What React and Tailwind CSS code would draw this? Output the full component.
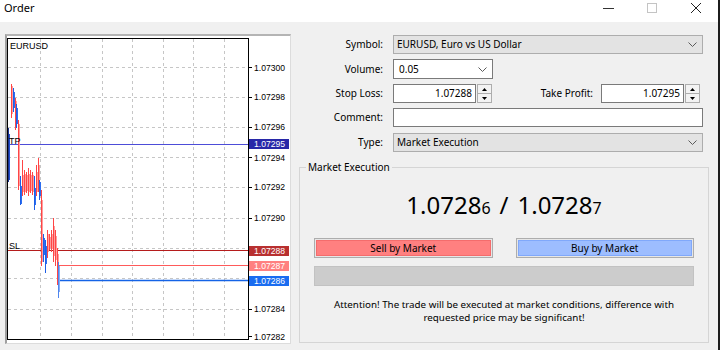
import React from 'react'

const GRID_X = [40, 71, 102, 132, 163, 193, 224]
const GRID_Y = [67, 97, 127, 157, 187, 218, 248, 278, 309]

// x, high, low, body top, body bottom, kind (page coords)
const CANDLES = [
  [8, 128, 182, 134, 180, 'd'],
  [11, 84, 118, 86, 114, 'r'],
  [13, 88, 112, 92, 108, 'b'],
  [15, 98, 130, 101, 127, 'r'],
  [16, 104, 128, 108, 124, 'b'],
  [18, 120, 190, 124, 186, 'r'],
  [20, 176, 205, 186, 204, 'b'],
  [22, 160, 196, 175, 192, 'r'],
  [24, 170, 195, 174, 192, 'r'],
  [26, 172, 193, 175, 191, 'r'],
  [28, 168, 196, 174, 192, 'r'],
  [30, 170, 193, 175, 191, 'r'],
  [32, 172, 195, 175, 192, 'r'],
  [34, 176, 210, 188, 205, 'b'],
  [36, 165, 196, 172, 192, 'r'],
  [38, 158, 192, 165, 186, 'r'],
  [39, 180, 200, 182, 196, 'b'],
  [41, 190, 266, 200, 262, 'r'],
  [43, 234, 262, 238, 255, 'b'],
  [45, 240, 273, 246, 264, 'b'],
  [47, 230, 258, 234, 252, 'r'],
  [49, 234, 250, 237, 248, 'r'],
  [51, 230, 252, 234, 249, 'r'],
  [53, 218, 262, 226, 256, 'r'],
  [55, 230, 266, 236, 260, 'r'],
  [57, 248, 285, 254, 280, 'r'],
  [58, 262, 298, 266, 292, 'l'],
]

const COLORS = {
  r: ['#ff4545', '#ff9e9e'],
  b: ['#1d5fe6', '#2d6ef0'],
  d: ['#1b2f8a', '#1d4fd0'],
  l: ['#4f86ee', '#86adf5'],
}

const AXIS = [
  { v: '1.07300', cls: 'top-[25px]' },
  { v: '1.07298', cls: 'top-[54px]' },
  { v: '1.07296', cls: 'top-[84px]' },
  { v: '1.07295', cls: 'top-[101px] bg-[#2828a8] text-white', box: true },
  { v: '1.07294', cls: 'top-[115px]' },
  { v: '1.07292', cls: 'top-[144px]' },
  { v: '1.07290', cls: 'top-[175px]' },
  { v: '1.07288', cls: 'top-[208px] bg-[#b83030] text-white', box: true },
  { v: '1.07287', cls: 'top-[223px] bg-[#ff8080] text-white', box: true },
  { v: '1.07286', cls: 'top-[238px] bg-[#1a6cf0] text-white', box: true },
  { v: '1.07284', cls: 'top-[266px]' },
  { v: '1.07282', cls: 'top-[294px]' },
]

function Chart() {
  return (
    <div className="relative w-[242px] h-[302px] border border-black">
      <svg width="240" height="300" className="absolute left-0 top-0">
        <g transform="translate(-8,-39)">
          {GRID_X.map((x) => (
            <line key={x} x1={x + 0.5} x2={x + 0.5} y1={39} y2={339} stroke="#c6c6c6" strokeDasharray="3 3" />
          ))}
          {GRID_Y.map((y) => (
            <line key={y} x1={8} x2={248} y1={y + 0.5} y2={y + 0.5} stroke="#c6c6c6" strokeDasharray="3 3" />
          ))}
          <line x1={8} x2={248} y1={144.5} y2={144.5} stroke="#4d4dd8" />
          <line x1={8} x2={248} y1={250.5} y2={250.5} stroke="#b51c1c" />
          <line x1={59} x2={248} y1={265.5} y2={265.5} stroke="#ff5a5a" />
          <line x1={57} x2={248} y1={280.5} y2={280.5} stroke="#1463e6" strokeWidth="1.4" />
          {CANDLES.map(([x, hi, lo, top, bot, kind], i) => (
            <g key={i}>
              <rect x={x} y={top} width={2} height={bot - top} fill={COLORS[kind][1]} />
              <line x1={x + 0.5} x2={x + 0.5} y1={hi} y2={lo} stroke={COLORS[kind][0]} />
            </g>
          ))}
          <g fontFamily="'Liberation Sans', sans-serif" fontSize="9" fill="#000">
            <text x={10} y={48.5}>EURUSD</text>
            <text x={9} y={143.5}>TP</text>
            <text x={9} y={249}>SL</text>
          </g>
        </g>
      </svg>
    </div>
  )
}

function Axis() {
  return (
    <div className="relative w-[41px] h-[302px] font-['Liberation_Sans',sans-serif] text-[8.6px]">
      <svg width="4" height="302" className="absolute left-0 top-0">
        {[29.5, 59.5, 89.5, 119.5, 149.5, 180.5, 271.5, 298.5].map((y) => (
          <line key={y} x1={0} x2={3} y1={y} y2={y} stroke="#000" />
        ))}
      </svg>
      {AXIS.map((a) => (
        <div
          key={a.v}
          className={`absolute h-[10px] leading-[10px] ${a.box ? 'left-0 w-[40px] pl-[5px]' : 'left-[5px]'} ${a.cls}`}
        >
          {a.v}
        </div>
      ))}
    </div>
  )
}

function Chevron() {
  return (
    <svg width="9" height="5" className="shrink-0">
      <polyline points="0.5,0.5 4.5,4.5 8.5,0.5" fill="none" stroke="#5a5a5a" />
    </svg>
  )
}

function Spinner() {
  return (
    <div className="ml-[1px] w-[15px] h-[19px] border border-[#adadad] bg-[#f3f3f3] flex flex-col">
      <div className="flex-1 flex items-center justify-center border-b border-[#adadad]">
        <svg width="5" height="3"><polygon points="2.5,0 5,3 0,3" fill="#000" /></svg>
      </div>
      <div className="flex-1 flex items-center justify-center">
        <svg width="5" height="3"><polygon points="0,0 5,0 2.5,3" fill="#000" /></svg>
      </div>
    </div>
  )
}

function Row({ label, children, className = 'h-[19px]' }) {
  return (
    <div className={`flex items-center ${className}`}>
      <div className="w-[84px] text-right">{label}</div>
      <div className="ml-[10px] flex-1 h-full flex items-center">{children}</div>
    </div>
  )
}

export default function App() {
  return (
    <div className="w-[720px] h-[350px] bg-[#f0f0f0] border-r-2 border-[#1c1c1c] flex flex-col overflow-hidden font-['Noto_Sans',sans-serif] text-[10px] text-black">
      {/* title bar */}
      <div className="h-[22px] bg-white flex items-start shrink-0">
        <div className="pl-[4px] text-[11px] leading-[16px]">Order</div>
        <div className="ml-auto flex">
          <div className="w-[44px] h-[16px] flex items-center justify-center">
            <svg width="11" height="1"><line x1="0" x2="11" y1="0.5" y2="0.5" stroke="#333" /></svg>
          </div>
          <div className="w-[44px] h-[16px] flex items-center justify-center">
            <svg width="10" height="10"><rect x="0.5" y="0.5" width="9" height="9" fill="none" stroke="#c4c4c4" /></svg>
          </div>
          <div className="w-[44px] h-[16px] flex items-center justify-center">
            <svg width="10" height="10">
              <line x1="0" y1="0" x2="10" y2="10" stroke="#222" />
              <line x1="10" y1="0" x2="0" y2="10" stroke="#222" />
            </svg>
          </div>
        </div>
      </div>

      <div className="flex items-start">
        {/* chart panel */}
        <div className="ml-[5px] mt-[12px] h-[310px] bg-white border-l-2 border-t-2 border-l-[#a0a0a0] border-t-[#b4b4b4] border-r border-b border-r-[#dcdcdc] border-b-[#dcdcdc] pt-[2px] flex">
          <Chart />
          <Axis />
        </div>

        {/* order form */}
        <div className="ml-[8px] mt-[13px] w-[410px] flex flex-col">
          <div className="w-[404px] flex flex-col gap-[5px]">
            <Row label="Symbol:">
              <div className="w-full h-full bg-[#e3e3e3] border border-[#adadad] flex items-center pl-[3px] pr-[5px]">
                <span className="flex-1">EURUSD, Euro vs US Dollar</span>
                <Chevron />
              </div>
            </Row>
            <Row label="Volume:" className="h-[20px]">
              <div className="w-[100px] h-full bg-white border border-[#7a7a7a] flex items-center pl-[5px] pr-[5px]">
                <span className="flex-1">0.05</span>
                <Chevron />
              </div>
            </Row>
            <Row label="Stop Loss:">
              <div className="w-[83px] h-full bg-white border border-[#7a7a7a] flex items-center justify-end pr-[3px]">1.07288</div>
              <Spinner />
              <div className="flex-1 text-right pr-[8px]">Take Profit:</div>
              <div className="w-[83px] h-full bg-white border border-[#7a7a7a] flex items-center justify-end pr-[3px]">1.07295</div>
              <Spinner />
              <div className="w-[3px]" />
            </Row>
            <Row label="Comment:">
              <div className="w-full h-full bg-white border border-[#7a7a7a]" />
            </Row>
            <Row label="Type:" className="h-[19px] mt-[1px]">
              <div className="w-full h-full bg-[#e3e3e3] border border-[#adadad] flex items-center pl-[3px] pr-[5px]">
                <span className="flex-1">Market Execution</span>
                <Chevron />
              </div>
            </Row>
          </div>

          {/* market execution group */}
          <div className="relative mt-[15px] h-[176px] border border-[#d5d5d5] px-[14px] flex flex-col">
            <div className="absolute -top-[8px] left-[6px] px-[2px] bg-[#f0f0f0] leading-[14px]">Market Execution</div>
            <div className="mt-[25px] h-[24px] flex items-baseline justify-center leading-[24px]">
              <span className="text-[24px]">1.0728</span>
              <span className="text-[16px]">6</span>
              <span className="text-[24px] mx-[9px]">/</span>
              <span className="text-[24px]">1.0728</span>
              <span className="text-[16px]">7</span>
            </div>
            <div className="mt-[21px] grid grid-cols-2 gap-[23px]">
              <div className="h-[20px] border border-[#adadad] p-[1px] bg-[#e6e6e6]">
                <div className="h-full bg-[#ff8080] border border-[#f46c6c] flex items-center justify-center">Sell by Market</div>
              </div>
              <div className="h-[20px] border border-[#adadad] p-[1px] bg-[#e6e6e6]">
                <div className="h-full bg-[#9dbdff] border border-[#80a8fb] flex items-center justify-center">Buy by Market</div>
              </div>
            </div>
            <div className="mt-[8px] h-[20px] bg-[#cccccc] border border-[#c2c2c2]" />
            <div className="mt-[12px] text-center text-[9.8px] leading-[13.4px]">
              Attention! The trade will be executed at market conditions, difference with
              <br />
              requested price may be significant!
            </div>
          </div>
        </div>
      </div>
    </div>
  )
}
